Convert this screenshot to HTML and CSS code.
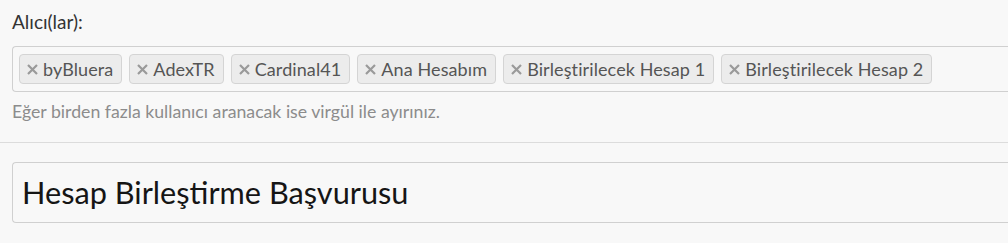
FILE: index.html
```html
<!DOCTYPE html>
<html lang="tr">
<head>
<meta charset="utf-8">
<title>Hesap Birleştirme</title>
<link rel="stylesheet" href="styles.css">
</head>
<body>
<div class="group">
  <label class="label">Alıcı(lar):</label>
  <div class="tags-input">
    <span class="tag"><svg class="x" viewBox="0 0 11 11"><path d="M1 1L10 10M10 1L1 10"/></svg>byBluera</span>
    <span class="tag"><svg class="x" viewBox="0 0 11 11"><path d="M1 1L10 10M10 1L1 10"/></svg>AdexTR</span>
    <span class="tag"><svg class="x" viewBox="0 0 11 11"><path d="M1 1L10 10M10 1L1 10"/></svg>Cardinal41</span>
    <span class="tag"><svg class="x" viewBox="0 0 11 11"><path d="M1 1L10 10M10 1L1 10"/></svg>Ana Hesabım</span>
    <span class="tag"><svg class="x" viewBox="0 0 11 11"><path d="M1 1L10 10M10 1L1 10"/></svg>Birleştirilecek Hesap 1</span>
    <span class="tag"><svg class="x" viewBox="0 0 11 11"><path d="M1 1L10 10M10 1L1 10"/></svg>Birleştirilecek Hesap 2</span>
  </div>
  <p class="help">Eğer birden fazla kullanıcı aranacak ise virgül ile ayırınız.</p>
</div>
<hr class="sep">
<div class="group2">
  <div class="subject">Hesap Birleştirme Başvurusu</div>
</div>
</body>
</html>
```

FILE: styles.css
```css
html, body {
  margin: 0;
  padding: 0;
  background: #f8f8f8;
  font-family: Lato, "Open Sans", sans-serif;
}
.group {
  padding: 11px 0 0 12px;
}
.label {
  display: block;
  font-size: 19px;
  line-height: 22px;
  color: #333;
  margin-bottom: 13px;
}
.tags-input {
  box-sizing: border-box;
  width: 1010px;
  height: 46px;
  border: 1px solid #d0d0d0;
  border-right: none;
  border-radius: 4px 0 0 4px;
  padding: 7px 6px;
  display: flex;
  gap: 7px;
}
.tag {
  box-sizing: border-box;
  height: 30px;
  display: inline-flex;
  align-items: center;
  padding: 0 8px 0 7px;
  background: #ececec;
  border: 1px solid #d4d4d4;
  border-radius: 4px;
  font-size: 18px;
  letter-spacing: 0.1px;
  color: #555;
  white-space: nowrap;
}
.x {
  width: 11px;
  height: 11px;
  margin-right: 5px;
  fill: none;
  stroke: #9a9a9a;
  stroke-width: 2.2;
}
.help {
  margin: 9px 0 0;
  font-size: 17.7px;
  line-height: 22px;
  color: #8c8c8c;
}
.sep {
  border: none;
  border-top: 1px solid #dcdcdc;
  margin: 19px 0 0;
}
.group2 {
  padding: 19px 0 0 12px;
}
.subject {
  box-sizing: border-box;
  height: 61px;
  width: 1010px;
  border: 1px solid #d0d0d0;
  border-right: none;
  border-radius: 4px 0 0 4px;
  padding: 0 9px;
  display: flex;
  align-items: center;
  font-size: 30.7px;
  color: #151515;
}
```
